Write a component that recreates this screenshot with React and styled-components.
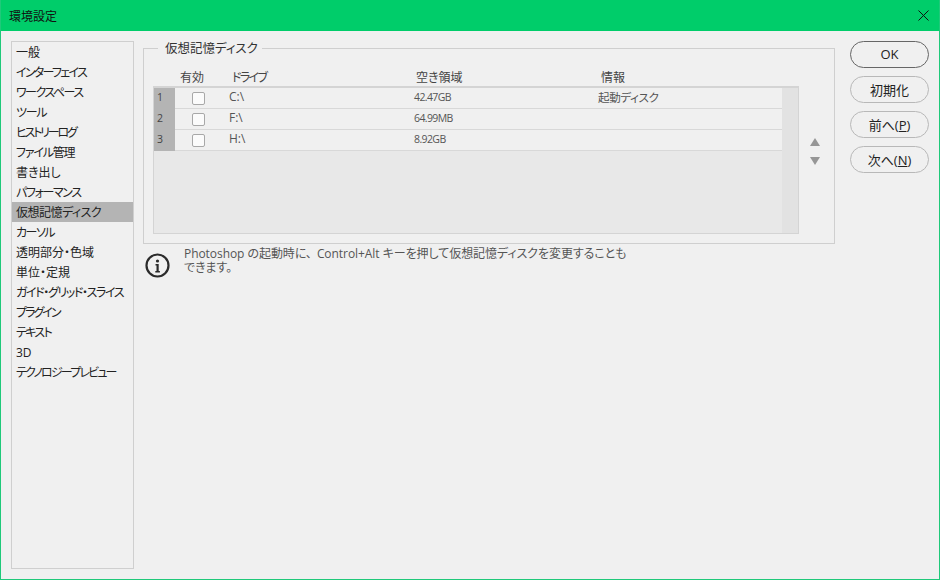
import React from 'react';
import styled, { createGlobalStyle } from 'styled-components';

const GlobalStyle = createGlobalStyle`
  html, body {
    margin: 0;
    padding: 0;
    background: #f0f0f0;
  }
  * {
    box-sizing: border-box;
  }
`;

const Dialog = styled.div`
  width: 940px;
  height: 580px;
  display: flex;
  flex-direction: column;
  background: #f0f0f0;
  border: 1px solid #1fc97a;
  border-top: 0;
  overflow: hidden;
  font-family: "Open Sans", "Noto Sans CJK JP", sans-serif;
  font-size: 12px;
  font-feature-settings: "palt";
  color: #222;
`;

const TitleBar = styled.div`
  height: 31px;
  flex: none;
  display: flex;
  align-items: center;
  justify-content: space-between;
  padding: 0 11px 0 9px;
  margin: 0 -1px;
  background: #00cd6a;
  color: #111;
  font-size: 12px;
`;

const CloseIcon = styled.svg`
  width: 11px;
  height: 11px;
  display: block;
`;

const Body = styled.div`
  flex: 1;
  display: flex;
  padding: 10px;
`;

const Sidebar = styled.ul`
  width: 123px;
  flex: none;
  height: 528px;
  margin: 0 9px 0 0;
  padding: 0;
  list-style: none;
  border: 1px solid #cfcfcf;
`;

const SideItem = styled.li`
  height: 20px;
  line-height: 19px;
  padding: 1px 0 0 4px;
  white-space: nowrap;
  letter-spacing: ${({ $track }) => $track || 0}px;
  background: ${({ $active }) => ($active ? '#b4b4b4' : 'transparent')};
`;

const Main = styled.div`
  width: 692px;
  flex: none;
  margin-right: 15px;
`;

const Group = styled.fieldset`
  margin: 0;
  padding: 14px 9px 9px;
  height: 203px;
  border: 1px solid #cfcfcf;
  min-width: 0;
`;

const GroupTitle = styled.legend`
  margin-left: 5px;
  padding: 0 4px 0 7px;
  font-size: 12.5px;
  line-height: 15px;
  color: #333;
`;

const ColumnHeads = styled.div`
  display: grid;
  grid-template-columns: 27px 52px 184px 185px 1fr;
  height: 16px;
  line-height: 15px;
  color: #444;
`;

const DriveHead = styled.span`
  letter-spacing: -1.7px;
`;

const Table = styled.div`
  position: relative;
  width: 646px;
  height: 148px;
  display: flex;
  border-style: solid;
  border-color: #d4d4d4;
  border-width: 2px 1px 1px 1px;
  background: #e8e8e8;
`;

const Rows = styled.div`
  flex: 1;
`;

const Scrollbar = styled.div`
  width: 16px;
  flex: none;
  background: #e2e2e2;
`;

const Row = styled.div`
  display: grid;
  grid-template-columns: 21px 54px 185px 184px 1fr;
  align-items: center;
  height: 21px;
  background: #f0f0f0;
  border-bottom: 1px solid #d8d8d8;
  color: #555;
  font-size: 10.5px;
`;

const RowNum = styled.span`
  align-self: stretch;
  margin-bottom: -1px;
  padding-left: 3px;
  line-height: 19px;
  background: #b4b4b4;
  color: #444;
`;

const CheckCell = styled.span`
  display: flex;
  justify-content: center;
  padding-right: 8px;
`;

const Check = styled.span`
  width: 13px;
  height: 13px;
  margin-top: 1px;
  border: 1px solid #a8a8a8;
  border-radius: 2px;
  background: #fbfbfb;
`;

const Cell = styled.span`
  font-size: ${({ $size }) => $size}px;
  letter-spacing: ${({ $track }) => $track || 0}px;
  margin-top: -3px;
`;

const Note = styled.div`
  display: flex;
  gap: 13px;
  padding-top: 3px;
  margin-left: 1px;
`;

const InfoIcon = styled.svg`
  width: 27px;
  height: 27px;
  flex: none;
  margin-top: 5px;
`;

const NoteText = styled.p`
  width: 450px;
  margin: 0;
  line-height: 14px;
  letter-spacing: -0.06px;
  color: #555;
`;

const WideComma = styled.span`
  margin-right: 5px;
`;

const Buttons = styled.div`
  width: 79px;
  flex: none;
  display: flex;
  flex-direction: column;
  gap: 8px;
`;

const Button = styled.button`
  height: 27px;
  padding: 0 0 1px;
  border: 1px solid ${({ $primary }) => ($primary ? '#666' : '#b8b8b8')};
  border-radius: 14px;
  background: #f0f0f0;
  color: #222;
  font-family: inherit;
  font-feature-settings: inherit;
  font-size: 13px;
`;

const Arrows = styled.div`
  position: absolute;
  left: 656px;
  top: 50px;
  display: flex;
  flex-direction: column;
  gap: 11px;
`;

const Arrow = styled.span`
  width: 0;
  height: 0;
  border-left: 5px solid transparent;
  border-right: 5px solid transparent;
  border-bottom: ${({ $down }) => ($down ? '0' : '8px solid #969696')};
  border-top: ${({ $down }) => ($down ? '8px solid #969696' : '0')};
`;

const categories = [
  { label: '一般' },
  { label: 'インターフェイス', track: -1.7 },
  { label: 'ワークスペース', track: -1.5 },
  { label: 'ツール', track: -1.3 },
  { label: 'ヒストリーログ', track: -2.2 },
  { label: 'ファイル管理', track: -1.2 },
  { label: '書き出し' },
  { label: 'パフォーマンス', track: -1.4 },
  { label: '仮想記憶ディスク', track: -0.5, active: true },
  { label: 'カーソル', track: -1.5 },
  { label: '透明部分・色域' },
  { label: '単位・定規' },
  { label: 'ガイド・グリッド・スライス', track: -1.4 },
  { label: 'プラグイン', track: -2 },
  { label: 'テキスト', track: -1.7 },
  { label: '3D' },
  { label: 'テクノロジープレビュー', track: -1.8 },
];

const drives = [
  { n: 1, drive: 'C:\\', free: '42.47GB', info: '起動ディスク' },
  { n: 2, drive: 'F:\\', free: '64.99MB', info: '' },
  { n: 3, drive: 'H:\\', free: '8.92GB', info: '' },
];

export default function App() {
  return (
    <>
      <GlobalStyle />
      <Dialog>
        <TitleBar>
          <span>環境設定</span>
          <CloseIcon viewBox="0 0 11 11">
            <path d="M0.5 0.5L10.5 10.5M10.5 0.5L0.5 10.5" stroke="#111" strokeWidth="1" fill="none" />
          </CloseIcon>
        </TitleBar>
        <Body>
          <Sidebar>
            {categories.map((c) => (
              <SideItem key={c.label} $track={c.track} $active={c.active}>
                {c.label}
              </SideItem>
            ))}
          </Sidebar>
          <Main>
            <Group>
              <GroupTitle>仮想記憶ディスク</GroupTitle>
              <ColumnHeads>
                <span />
                <span>有効</span>
                <DriveHead>ドライブ</DriveHead>
                <span>空き領域</span>
                <span>情報</span>
              </ColumnHeads>
              <Table>
                <Rows>
                  {drives.map((d) => (
                    <Row key={d.n}>
                      <RowNum>{d.n}</RowNum>
                      <CheckCell>
                        <Check />
                      </CheckCell>
                      <Cell $size={12}>{d.drive}</Cell>
                      <Cell $size={10.5} $track={-0.6}>{d.free}</Cell>
                      <Cell $size={11.5} $track={-0.3}>{d.info}</Cell>
                    </Row>
                  ))}
                </Rows>
                <Scrollbar />
                <Arrows>
                  <Arrow />
                  <Arrow $down />
                </Arrows>
              </Table>
            </Group>
            <Note>
              <InfoIcon viewBox="0 0 27 27">
                <circle cx="13.5" cy="13.5" r="11" fill="none" stroke="#2b2b2b" strokeWidth="2.2" />
                <circle cx="13.5" cy="9" r="1.6" fill="#2b2b2b" />
                <path d="M11.5 12h3.2v7h1.2v1.4h-4.6V19h1.2v-5.6h-1z" fill="#2b2b2b" />
              </InfoIcon>
              <NoteText>
                Photoshop の起動時に<WideComma>、</WideComma>Control+Alt キーを押して仮想記憶ディスクを変更することも
                <br />
                できます。
              </NoteText>
            </Note>
          </Main>
          <Buttons>
            <Button $primary>OK</Button>
            <Button>初期化</Button>
            <Button>
              前へ(<u>P</u>)
            </Button>
            <Button>
              次へ(<u>N</u>)
            </Button>
          </Buttons>
        </Body>
      </Dialog>
    </>
  );
}
